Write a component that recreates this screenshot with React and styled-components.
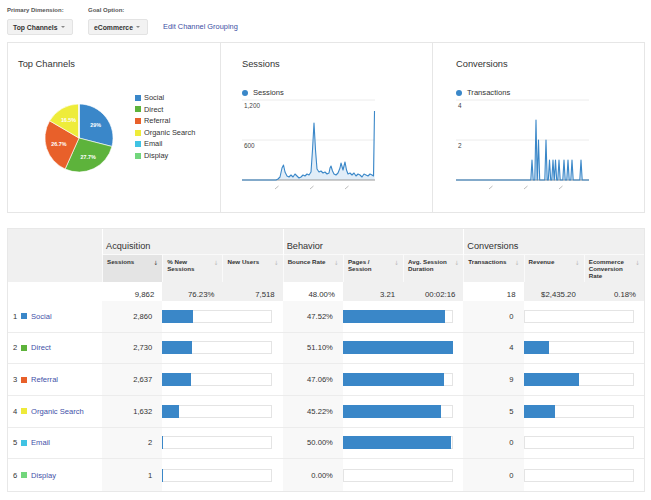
import React from 'react';
import styled, { createGlobalStyle } from 'styled-components';

const GlobalStyle = createGlobalStyle`
  html, body { margin: 0; padding: 0; background: #fff; }
  body { font-family: "Liberation Sans", Arial, sans-serif; color: #333; }
  * { box-sizing: border-box; }
`;

const BLUE = '#3a87c8';

const Page = styled.div`
  width: 651px;
  padding: 6px 6px 0 7px;
`;

const FilterBar = styled.div`
  display: flex;
  align-items: flex-end;
  gap: 15px;
`;

const FilterGroup = styled.div`
  display: flex;
  flex-direction: column;
  gap: 4px;
`;

const FilterLabel = styled.div`
  font-size: 6px;
  font-weight: bold;
  color: #555;
  line-height: 9px;
  white-space: nowrap;
`;

const Dropdown = styled.div`
  width: ${(p) => p.$w}px;
  height: 16px;
  background: #f2f2f2;
  border: 1px solid #e3e3e3;
  border-radius: 2px;
  display: flex;
  align-items: center;
  justify-content: space-between;
  padding: 0 7px 0 5px;
  font-size: 6.8px;
  font-weight: bold;
  color: #333;
  white-space: nowrap;
`;

const Caret = styled.span`
  width: 0;
  height: 0;
  border-left: 2px solid transparent;
  border-right: 2px solid transparent;
  border-top: 2.5px solid #888;
`;

const EditLink = styled.a`
  font-size: 7.4px;
  line-height: 16px;
  color: #3b4ea3;
  text-decoration: none;
  white-space: nowrap;
`;

const PanelRow = styled.div`
  margin-top: 7px;
  height: 171px;
  display: grid;
  grid-template-columns: repeat(3, 1fr);
  border: 1px solid #e6e6e6;
`;

const Panel = styled.div`
  padding: 15px 0 0 ${(p) => p.$pad}px;
  & + & {
    border-left: 1px solid #e6e6e6;
  }
`;

const PanelTitle = styled.div`
  font-size: 9.3px;
  line-height: 12px;
  color: #333;
`;

const PieBody = styled.div`
  display: flex;
  align-items: flex-start;
  padding-left: 27px;
  gap: 22px;
`;

const PieSvg = styled.svg`
  margin-top: 34px;
  flex: none;
`;

const Legend = styled.div`
  margin-top: 22px;
  display: flex;
  flex-direction: column;
`;

const LegendItem = styled.div`
  display: flex;
  align-items: center;
  gap: 3px;
  font-size: 7.4px;
  line-height: 11.6px;
  color: #333;
  white-space: nowrap;
`;

const Swatch = styled.span`
  width: 6px;
  height: 6px;
  background: ${(p) => p.$c};
  flex: none;
`;

const ChartLegend = styled.div`
  margin-top: 19px;
  display: flex;
  align-items: center;
  gap: 5px;
  font-size: 7.6px;
  line-height: 8px;
  color: #333;
`;

const Dot = styled.span`
  width: 6px;
  height: 6px;
  border-radius: 50%;
  background: ${BLUE};
`;

const ChartSvg = styled.svg`
  display: block;
  margin-top: -1px;
`;

const Table = styled.div`
  margin-top: 15px;
  width: 638px;
  display: grid;
  grid-template-columns: 94px repeat(9, 1fr);
  grid-template-rows: 26px 27px 19px repeat(6, 31.67px);
  border: 1px solid #e8e8e8;
`;

const GroupCorner = styled.div`
  grid-row: span 2;
  background: #f0f0f0;
`;

const GroupHead = styled.div`
  grid-column: span 3;
  background: #f0f0f0;
  border-left: 1px solid #fff;
  border-bottom: 1px solid #fafafa;
  display: flex;
  align-items: flex-end;
  padding: 0 0 2.5px 3px;
  font-size: 9.2px;
  line-height: 11px;
  color: #333;
`;

const ColHead = styled.div`
  background: ${(p) => (p.$sorted ? '#e4e4e4' : '#f0f0f0')};
  border-left: 1px solid #fafafa;
  padding: 4px 4px 0 4px;
  display: flex;
  justify-content: space-between;
  align-items: flex-start;
  gap: 4px;
  font-size: 6.2px;
  font-weight: bold;
  line-height: 6.8px;
  color: #333;
`;

const SortArrow = styled.span`
  font-family: "DejaVu Sans", sans-serif;
  font-weight: normal;
  font-size: 6px;
  line-height: 7px;
  color: ${(p) => (p.$active ? '#444' : '#bbb')};
  flex: none;
`;

const TotalCell = styled.div`
  background: ${(p) => (p.$white ? '#fff' : '#f0f0f0')};
  display: flex;
  align-items: flex-end;
  justify-content: flex-end;
  padding: 0 8px 2.5px 0;
  font-size: 7.8px;
  line-height: 9px;
  color: #333;
`;

const TotalLabel = styled.div`
  background: #fff;
`;

const RowLabel = styled.div`
  display: flex;
  align-items: center;
  padding-left: 5px;
  font-size: 7.6px;
  border-bottom: ${(p) => (p.$last ? 'none' : '1px solid #ececec')};
  white-space: nowrap;
`;

const Index = styled.span`
  color: #333;
  margin-right: 3.8px;
`;

const RowSwatch = styled(Swatch)`
  margin-right: 4px;
`;

const ChannelLink = styled.a`
  color: #3f51a8;
  text-decoration: none;
`;

const ValueCell = styled.div`
  background: #f8f8f8;
  display: flex;
  align-items: center;
  justify-content: flex-end;
  padding-right: 10px;
  font-size: 7.6px;
  color: #333;
  border-bottom: ${(p) => (p.$last ? 'none' : '1px solid #ececec')};
`;

const BarCell = styled.div`
  grid-column: span 2;
  display: flex;
  align-items: center;
  background: #fff;
  border-bottom: ${(p) => (p.$last ? 'none' : '1px solid #ececec')};
`;

const Track = styled.div`
  width: 110px;
  height: 13px;
  background: #fff;
  box-shadow: inset 0 0 0 1px #e4e4e4;
  display: flex;
`;

const Fill = styled.div`
  height: 100%;
  background: ${BLUE};
`;

const pieData = [
  { name: 'Social', color: '#3a87c9', v: 2860, label: '29%' },
  { name: 'Direct', color: '#5db33b', v: 2730, label: '27.7%' },
  { name: 'Referral', color: '#e8602a', v: 2637, label: '26.7%' },
  { name: 'Organic Search', color: '#eeec3a', v: 1632, label: '16.5%' },
  { name: 'Email', color: '#40c3e3', v: 2 },
  { name: 'Display', color: '#72d67c', v: 1 },
];

function Pie() {
  const total = pieData.reduce((s, d) => s + d.v, 0);
  const r = 34;
  const c = 34;
  let acc = 0;
  const slices = pieData.map((d) => {
    const a0 = (acc / total) * Math.PI * 2;
    acc += d.v;
    const a1 = (acc / total) * Math.PI * 2;
    const mid = (a0 + a1) / 2;
    const p0 = [c + r * Math.sin(a0), c - r * Math.cos(a0)];
    const p1 = [c + r * Math.sin(a1), c - r * Math.cos(a1)];
    const large = a1 - a0 > Math.PI ? 1 : 0;
    const path = `M${c},${c} L${p0[0]},${p0[1]} A${r},${r} 0 ${large} 1 ${p1[0]},${p1[1]} Z`;
    return { ...d, path, lx: c + 21 * Math.sin(mid), ly: c - 21 * Math.cos(mid) };
  });
  return (
    <PieSvg width="68" height="68" viewBox="0 0 68 68">
      {slices.map((s) => (
        <path key={s.name} d={s.path} fill={s.color} stroke="#fff" strokeWidth="0.6" />
      ))}
      {slices
        .filter((s) => s.label)
        .map((s) => (
          <text
            key={s.name + 'l'}
            x={s.lx}
            y={s.ly}
            textAnchor="middle"
            dominantBaseline="central"
            fontSize="5.4"
            fontWeight="bold"
            fill="#fff"
            fontFamily="Liberation Sans, Arial, sans-serif"
          >
            {s.label}
          </text>
        ))}
    </PieSvg>
  );
}

const sessionsPts = [
  [242, 180], [276, 180], [278, 179], [280, 177], [282, 168], [283.5, 165], [285, 172], [287, 176],
  [289, 177], [291, 175], [293, 177], [295, 174], [297, 176], [299, 178], [301, 177], [303, 175],
  [305, 176], [307, 174], [309, 175], [311, 172], [312.5, 150], [314, 123], [315.5, 150], [317, 169],
  [319, 172], [321, 171], [323, 173], [325, 172], [327, 174], [329, 173], [330, 168], [331, 166],
  [332.5, 171], [334, 174], [336, 175], [338, 173], [340, 168], [341, 163], [343, 170], [345, 162],
  [346.5, 170], [348, 174], [350, 173], [352, 175], [354, 173], [356, 176], [358, 174], [360, 175],
  [362, 177], [364, 174], [366, 175], [368, 176], [370, 174], [372, 175], [373.5, 176], [374.5, 111],
];

function buildConversions() {
  const spikes = [
    [532, 1], [536, 3], [538.5, 2], [546, 2], [549.5, 1], [553, 1], [555.5, 1], [559, 1],
    [564, 1], [568, 1], [572, 1], [581, 1],
  ];
  const pts = [[456, 180]];
  spikes.forEach(([x, v]) => {
    pts.push([x - 1.2, 180]);
    pts.push([x, 180 - v * 20]);
    pts.push([x + 1.2, 180]);
  });
  pts.push([589, 180]);
  return pts;
}
const conversionPts = buildConversions();

function LineChart({ points, x0, labels, ticks }) {
  const pts = points.map(([x, y]) => [x - x0, y - 96]);
  const line = pts.map((p, i) => `${i ? 'L' : 'M'}${p[0]},${p[1]}`).join(' ');
  const area = `${line} L${pts[pts.length - 1][0]},84 L${pts[0][0]},84 Z`;
  return (
    <ChartSvg width="136" height="100" viewBox="0 0 136 100">
      <line x1="0" y1="4" x2="133" y2="4" stroke="#ececec" strokeWidth="1" />
      <line x1="0" y1="44" x2="133" y2="44" stroke="#ececec" strokeWidth="1" />
      <text x="2" y="11.5" fontSize="6.4" fill="#444" fontFamily="Liberation Sans, Arial, sans-serif">
        {labels[0]}
      </text>
      <text x="2" y="51.5" fontSize="6.4" fill="#444" fontFamily="Liberation Sans, Arial, sans-serif">
        {labels[1]}
      </text>
      <path d={area} fill="#e1edf8" />
      <line x1="0" y1="84" x2="133" y2="84" stroke="#999" strokeWidth="1" />
      <path d={line} fill="none" stroke={BLUE} strokeWidth="1.1" strokeLinejoin="round" />
      {ticks.map((t) => (
        <line key={t} x1={t - x0 - 2} y1="93" x2={t - x0 + 1.5} y2="90" stroke="#aaa" strokeWidth="0.8" />
      ))}
    </ChartSvg>
  );
}

const rows = [
  { n: 1, name: 'Social', color: '#3a87c9', sessions: '2,860', newBar: 31, bounce: '47.52%', bBar: 102, tx: '0', tBar: 0 },
  { n: 2, name: 'Direct', color: '#5db33b', sessions: '2,730', newBar: 30, bounce: '51.10%', bBar: 110, tx: '4', tBar: 25 },
  { n: 3, name: 'Referral', color: '#e8602a', sessions: '2,637', newBar: 29, bounce: '47.06%', bBar: 101, tx: '9', tBar: 55 },
  { n: 4, name: 'Organic Search', color: '#eeea3a', sessions: '1,632', newBar: 17, bounce: '45.22%', bBar: 98, tx: '5', tBar: 31 },
  { n: 5, name: 'Email', color: '#40c3e3', sessions: '2', newBar: 1, bounce: '50.00%', bBar: 108, tx: '0', tBar: 0 },
  { n: 6, name: 'Display', color: '#72d67c', sessions: '1', newBar: 1, bounce: '0.00%', bBar: 0, tx: '0', tBar: 0 },
];

const columns = [
  { title: 'Sessions', sorted: true },
  { title: '% New Sessions' },
  { title: 'New Users' },
  { title: 'Bounce Rate' },
  { title: 'Pages / Session' },
  { title: 'Avg. Session Duration' },
  { title: 'Transactions' },
  { title: 'Revenue' },
  { title: 'Ecommerce Conversion Rate' },
];

const totals = [
  { v: '9,862', white: true },
  { v: '76.23%' },
  { v: '7,518' },
  { v: '48.00%', white: true },
  { v: '3.21' },
  { v: '00:02:16' },
  { v: '18', white: true },
  { v: '$2,435.20' },
  { v: '0.18%' },
];

function Bar({ w, last }) {
  return (
    <BarCell $last={last}>
      <Track>{w > 0 && <Fill style={{ width: `${w}px` }} />}</Track>
    </BarCell>
  );
}

export default function App() {
  return (
    <>
      <GlobalStyle />
      <Page>
        <FilterBar>
          <FilterGroup>
            <FilterLabel>Primary Dimension:</FilterLabel>
            <Dropdown $w={66}>
              Top Channels <Caret />
            </Dropdown>
          </FilterGroup>
          <FilterGroup>
            <FilterLabel>Goal Option:</FilterLabel>
            <Dropdown $w={60}>
              eCommerce <Caret />
            </Dropdown>
          </FilterGroup>
          <EditLink href="#">Edit Channel Grouping</EditLink>
        </FilterBar>

        <PanelRow>
          <Panel $pad={10}>
            <PanelTitle>Top Channels</PanelTitle>
            <PieBody>
              <Pie />
              <Legend>
                {pieData.map((d) => (
                  <LegendItem key={d.name}>
                    <Swatch $c={d.color} />
                    {d.name}
                  </LegendItem>
                ))}
              </Legend>
            </PieBody>
          </Panel>
          <Panel $pad={21}>
            <PanelTitle>Sessions</PanelTitle>
            <ChartLegend>
              <Dot />
              Sessions
            </ChartLegend>
            <LineChart points={sessionsPts} x0={242} labels={['1,200', '600']} ticks={[277, 312, 347]} />
          </Panel>
          <Panel $pad={23}>
            <PanelTitle>Conversions</PanelTitle>
            <ChartLegend>
              <Dot />
              Transactions
            </ChartLegend>
            <LineChart points={conversionPts} x0={456} labels={['4', '2']} ticks={[491, 526, 561]} />
          </Panel>
        </PanelRow>

        <Table>
          <GroupCorner />
          <GroupHead>Acquisition</GroupHead>
          <GroupHead>Behavior</GroupHead>
          <GroupHead>Conversions</GroupHead>
          {columns.map((c) => (
            <ColHead key={c.title} $sorted={c.sorted}>
              <span>{c.title}</span>
              <SortArrow $active={c.sorted}>↓</SortArrow>
            </ColHead>
          ))}
          <TotalLabel />
          {totals.map((t, i) => (
            <TotalCell key={i} $white={t.white}>
              {t.v}
            </TotalCell>
          ))}
          {rows.map((r, i) => {
            const last = i === rows.length - 1;
            return (
              <React.Fragment key={r.name}>
                <RowLabel $last={last}>
                  <Index>{r.n}</Index>
                  <RowSwatch $c={r.color} />
                  <ChannelLink href="#">{r.name}</ChannelLink>
                </RowLabel>
                <ValueCell $last={last}>{r.sessions}</ValueCell>
                <Bar w={r.newBar} last={last} />
                <ValueCell $last={last}>{r.bounce}</ValueCell>
                <Bar w={r.bBar} last={last} />
                <ValueCell $last={last}>{r.tx}</ValueCell>
                <Bar w={r.tBar} last={last} />
              </React.Fragment>
            );
          })}
        </Table>
      </Page>
    </>
  );
}
